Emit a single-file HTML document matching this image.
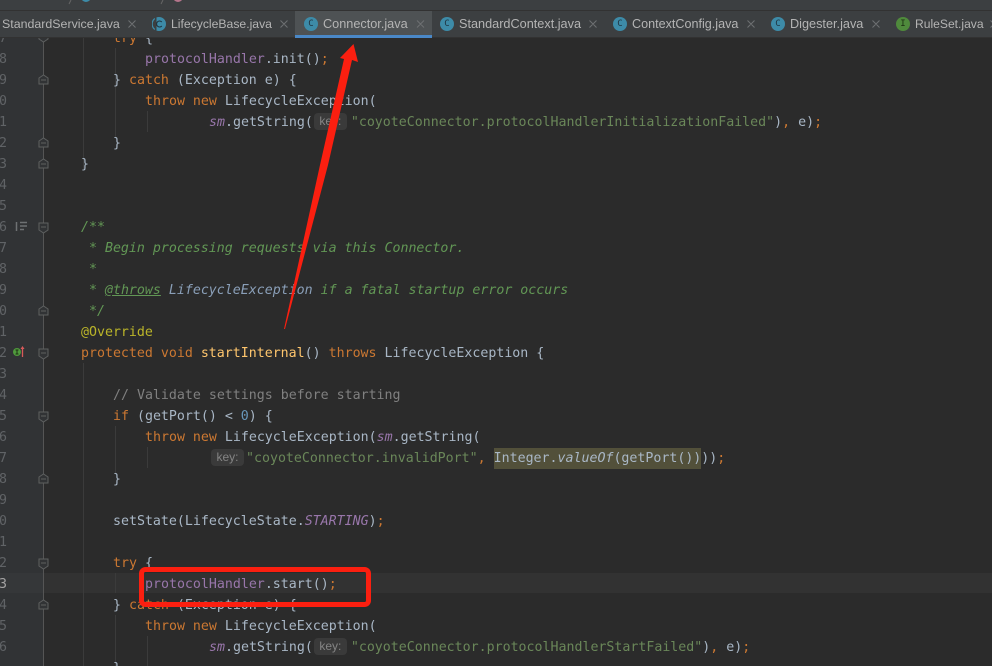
<!DOCTYPE html>
<html><head><meta charset="utf-8">
<style>
html,body{margin:0;padding:0;background:#2b2b2b}
#root{position:relative;width:992px;height:666px;overflow:hidden;background:#2b2b2b;font-family:"DejaVu Sans Mono","Liberation Mono",monospace;font-size:13.28px;color:#a9b7c6}
.gut{position:absolute;left:0;top:37px;width:43px;height:629px;background:#313335;border-right:1px solid #555}
.cur{position:absolute;left:44px;right:0;top:573px;height:20px;background:#323232}
.curg{position:absolute;left:0;width:43px;top:573px;height:20px;background:#353739}
.l{position:absolute;white-space:pre;line-height:21px;height:21px;margin-top:1px}
.n{position:absolute;left:-2px;width:9px;text-align:right;color:#606366;line-height:21px;overflow:visible;white-space:pre;margin-top:1px}
.k{color:#cc7832}.s{color:#6a8759}.c{color:#808080}.d{color:#629755;font-style:italic}.f{color:#9876aa}.i{font-style:italic}.y{color:#ffc66d}.a{color:#bbb529}.b{color:#6897bb}
.tagd{color:#629755;font-style:italic;text-decoration:underline}
.dl{color:#8a9fb8;font-style:italic}
.hint{display:inline-block;background:#3a3a3a;color:#858585;font:12px/17px "Liberation Sans",sans-serif;border-radius:4px;height:17px;width:33px;text-align:center;vertical-align:top;margin-top:1px}
.hl{background:#52503a;display:inline-block;height:21px;vertical-align:top}
.ig{position:absolute;width:1px;background:#3b3b3b}
#top{position:absolute;left:0;top:0;width:992px;height:10px;background:#3c3f41;border-bottom:1px solid #323232}
#tabs{position:absolute;left:0;top:11px;width:992px;height:26px;background:#3c3f41;border-bottom:1px solid #323232;font:12.6px/27px "Liberation Sans",sans-serif;color:#b4b4b4}
#acttab{position:absolute;left:295px;top:0;width:137px;background:#4e5254;border-bottom:3px solid #4a88c7;box-sizing:border-box;height:27px}
.t{position:absolute;top:0;white-space:pre}
.ic{position:absolute;top:6px;width:14px;height:14px;border-radius:50%;background:#3d8ba8;color:#1f3440;font:9px/14px "DejaVu Sans Mono",monospace;text-align:center}
.ic.g{background:#4f8a3c;color:#1c3013}
svg.o{position:absolute;left:0;top:0}
</style></head><body>
<div id="root">
<div class="gut"></div>
<div class="curg"></div>
<div class="cur"></div>

<div class="ig" style="left:83px;top:37px;height:132px"></div>
<div class="ig" style="left:83px;top:363px;height:303px"></div>
<div class="ig" style="left:115px;top:48px;height:90px"></div>
<div class="ig" style="left:115px;top:426px;height:48px"></div>
<div class="ig" style="left:115px;top:573px;height:20px"></div>
<div class="ig" style="left:115px;top:615px;height:51px"></div>
<div class="ig" style="left:147px;top:111px;height:21px"></div>
<div class="ig" style="left:147px;top:447px;height:21px"></div>
<div class="ig" style="left:147px;top:636px;height:30px"></div>

<div class="n" style="top:27px">7</div>
<div class="n" style="top:48px">8</div>
<div class="n" style="top:69px">9</div>
<div class="n" style="top:90px">0</div>
<div class="n" style="top:111px">1</div>
<div class="n" style="top:132px">2</div>
<div class="n" style="top:153px">3</div>
<div class="n" style="top:174px">4</div>
<div class="n" style="top:195px">5</div>
<div class="n" style="top:216px">6</div>
<div class="n" style="top:237px">7</div>
<div class="n" style="top:258px">8</div>
<div class="n" style="top:279px">9</div>
<div class="n" style="top:300px">0</div>
<div class="n" style="top:321px">1</div>
<div class="n" style="top:342px">2</div>
<div class="n" style="top:363px">3</div>
<div class="n" style="top:384px">4</div>
<div class="n" style="top:405px">5</div>
<div class="n" style="top:426px">6</div>
<div class="n" style="top:447px">7</div>
<div class="n" style="top:468px">8</div>
<div class="n" style="top:489px">9</div>
<div class="n" style="top:510px">0</div>
<div class="n" style="top:531px">1</div>
<div class="n" style="top:552px">2</div>
<div class="n" style="top:573px;color:#a4a3a3">3</div>
<div class="n" style="top:594px">4</div>
<div class="n" style="top:615px">5</div>
<div class="n" style="top:636px">6</div>

<div class="l" style="left:113px;top:27px"><span class="k">try</span> {</div>
<div class="l" style="left:145px;top:48px"><span class="f">protocolHandler</span>.init()<span class="k">;</span></div>
<div class="l" style="left:113px;top:69px">} <span class="k">catch</span> (Exception e) {</div>
<div class="l" style="left:145px;top:90px"><span class="k">throw new</span> LifecycleException(</div>
<div class="l" style="left:209px;top:111px"><span class="f i">sm</span>.getString(<span class="hint" style="margin-left:1px">key:</span> <span class="s" style="margin-left:-4px">"coyoteConnector.protocolHandlerInitializationFailed"</span>)<span class="k">,</span> e)<span class="k">;</span></div>
<div class="l" style="left:113px;top:132px">}</div>
<div class="l" style="left:81px;top:153px">}</div>
<div class="l d" style="left:81px;top:216px">/**</div>
<div class="l d" style="left:81px;top:237px"> * Begin processing requests via this Connector.</div>
<div class="l d" style="left:81px;top:258px"> *</div>
<div class="l d" style="left:81px;top:279px"> * <span class="tagd">@throws</span> <span class="dl">LifecycleException</span> if a fatal startup error occurs</div>
<div class="l d" style="left:81px;top:300px"> */</div>
<div class="l a" style="left:81px;top:321px">@Override</div>
<div class="l" style="left:81px;top:342px"><span class="k">protected void</span> <span class="y">startInternal</span>() <span class="k">throws</span> LifecycleException {</div>
<div class="l c" style="left:113px;top:384px">// Validate settings before starting</div>
<div class="l" style="left:113px;top:405px"><span class="k">if</span> (getPort() &lt; <span class="b">0</span>) {</div>
<div class="l" style="left:145px;top:426px"><span class="k">throw new</span> LifecycleException(<span class="f i">sm</span>.getString(</div>
<div class="l" style="left:211px;top:447px"><span class="hint">key:</span><span class="s" style="margin-left:2px">"coyoteConnector.invalidPort"</span><span class="k">,</span> <span class="hl">Integer.<span class="i">valueOf</span>(getPort())</span>))<span class="k">;</span></div>
<div class="l" style="left:113px;top:468px">}</div>
<div class="l" style="left:113px;top:510px">setState(LifecycleState.<span class="f i">STARTING</span>)<span class="k">;</span></div>
<div class="l" style="left:113px;top:552px"><span class="k">try</span> {</div>
<div class="l" style="left:145px;top:573px"><span class="f">protocolHandler</span>.start()<span class="k">;</span></div>
<div class="l" style="left:113px;top:594px">} <span class="k">catch</span> (Exception e) {</div>
<div class="l" style="left:145px;top:615px"><span class="k">throw new</span> LifecycleException(</div>
<div class="l" style="left:209px;top:636px"><span class="f i">sm</span>.getString(<span class="hint" style="margin-left:1px">key:</span> <span class="s" style="margin-left:-4px">"coyoteConnector.protocolHandlerStartFailed"</span>)<span class="k">,</span> e)<span class="k">;</span></div>
<div class="l" style="left:113px;top:657px">}</div>

<svg class="o" width="992" height="666" fill="none">
<g stroke="#5e6060" stroke-width="1" fill="#313335">
<path d="M39 37h9v2l-4.500 3l-4.500-3z"/>
<path d="M39 78l4.500-3l4.500 3v6h-9z"/><path d="M41 80h5"/>
<path d="M39 141l4.500-3l4.500 3v6h-9z"/><path d="M41 143h5"/>
<path d="M39 162l4.500-3l4.500 3v6h-9z"/><path d="M41 164h5"/>
<path d="M39 223h9v7l-4.500 3l-4.500-3z"/><path d="M41 227h5"/>
<path d="M39 309l4.500-3l4.500 3v6h-9z"/><path d="M41 311h5"/>
<path d="M39 349h9v7l-4.500 3l-4.500-3z"/><path d="M41 353h5"/>
<path d="M39 412h9v7l-4.500 3l-4.500-3z"/><path d="M41 416h5"/>
<path d="M39 477l4.500-3l4.500 3v6h-9z"/><path d="M41 479h5"/>
<path d="M39 559h9v7l-4.500 3l-4.500-3z"/><path d="M41 563h5"/>
<path d="M39 603l4.500-3l4.500 3v6h-9z"/><path d="M41 605h5"/>
</g>
<path d="M16.500 222v9M20 222.500h7M20 226h7M20 229.500h4" stroke="#6e7173" stroke-width="1.500"/>
<circle cx="17" cy="352" r="4" fill="#4f9a3c"/>
<path d="M15.500 350h3M17 350v4M15.500 354h3" stroke="#1c3013" stroke-width="1"/>
<path d="M22.500 357v-9" stroke="#d85a5a" stroke-width="1.300"/><path d="M20.500 349l2-3l2 3z" fill="#d85a5a"/>
</svg>

<div id="top"></div>
<svg class="o" width="300" height="10" fill="none" style="z-index:2">
<path d="M71 0l-2 4M163 0l-2 4" stroke="#666"/>
<circle cx="86" cy="-3" r="5" fill="#3d8ba8"/>
<circle cx="178" cy="-3" r="5" fill="#b5758c"/>
</svg>
<div id="tabs">
<div id="acttab"></div>
<div class="t" style="left:2px;font-size:12.4px">StandardService.java</div>
<svg class="o" style="left:152px;top:6px" width="15" height="14" fill="none"><path d="M4.500 0.400a7 7 0 0 1 2.500-.400a7 7 0 0 1 0 14a7 7 0 0 1 -2.500-.400z" fill="#3d8ba8"/><path d="M2.800 1.500a7 7 0 0 0 0 11" stroke="#3d8ba8" stroke-width="1.300"/><path d="M9.800 5a3 3 0 1 0 0 4" stroke="#1f3440" stroke-width="1.100"/></svg>
<div class="t" style="left:171px;font-size:12.200px">LifecycleBase.java</div>
<div class="ic" style="left:304px">C</div><div class="t" style="left:323px;font-size:12.700px">Connector.java</div>
<div class="ic" style="left:440px">C</div><div class="t" style="left:459px;font-size:12.700px">StandardContext.java</div>
<div class="ic" style="left:613px">C</div><div class="t" style="left:632px;font-size:12.600px">ContextConfig.java</div>
<div class="ic" style="left:771px">C</div><div class="t" style="left:790px;font-size:12.700px">Digester.java</div>
<div class="ic g" style="left:896px">I</div><div class="t" style="left:915px;font-size:12.100px">RuleSet.java</div>
</div>
<svg class="o" width="992" height="37" fill="none" stroke="#6e7173" stroke-width="1" style="z-index:2">
<path d="M128.500 20.500l7 7m0-7l-7 7M280.500 20.500l7 7m0-7l-7 7M417 20.500l7 7m0-7l-7 7M589.500 20.500l7 7m0-7l-7 7M747.500 20.500l7 7m0-7l-7 7M872.500 20.500l7 7m0-7l-7 7M990.500 20.500l7 7m0-7l-7 7"/>
</svg>

<svg class="o" width="992" height="666" style="z-index:3">
<path d="M353.500 44L358 62L352 60L328 165L285 329L284 329L320 165L344 59L340 58Z" fill="#fb1f10"/>
<rect x="141.500" y="569.500" width="227" height="35" rx="4" fill="none" stroke="#fb1f10" stroke-width="5"/>
</svg>
</div>
</body></html>
